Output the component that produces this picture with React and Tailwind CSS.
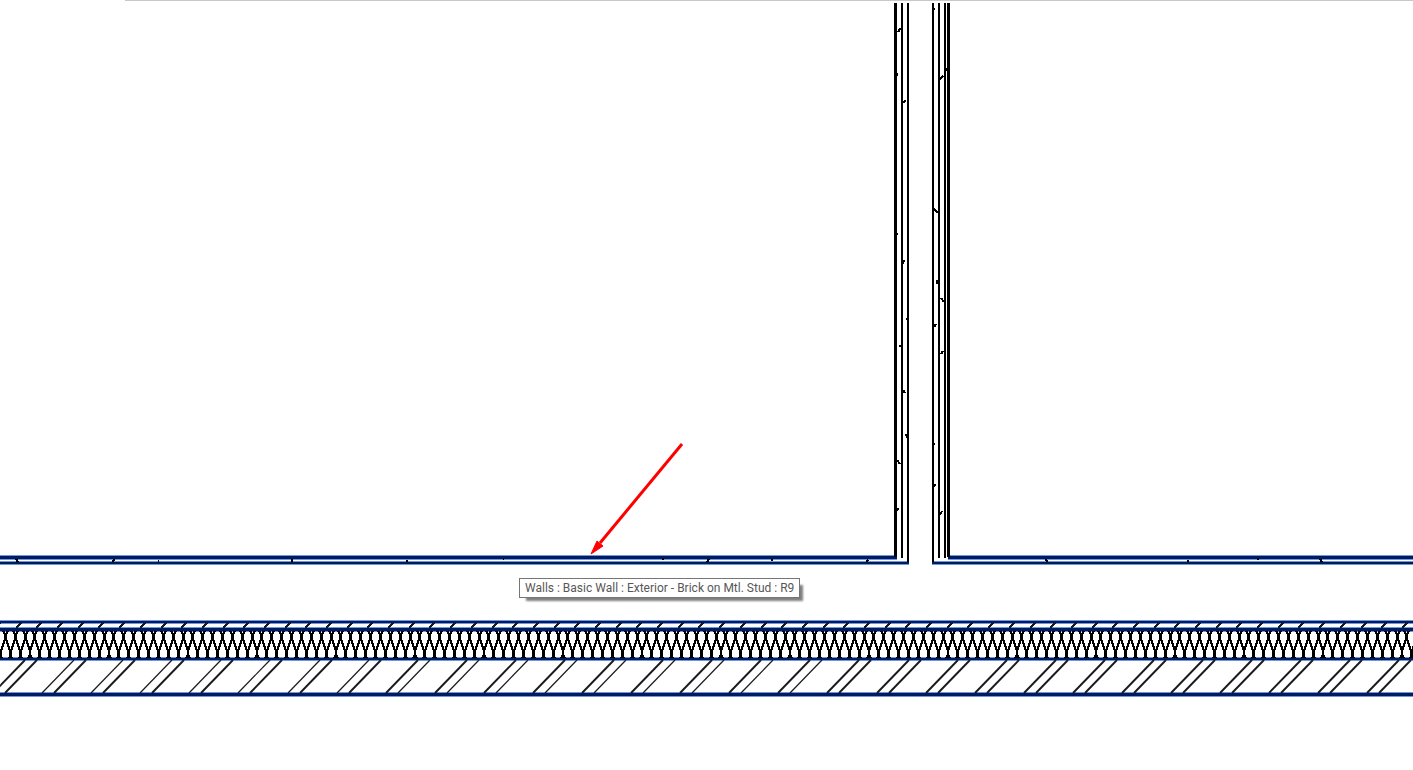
const BRICK = Array.from({ length: 31 }, (_, i) => Math.round(-24 + i * 49.08));
const SHEATH = Array.from({ length: 70 }, (_, i) => Math.round(i * 20.69));
const BATT = Array.from({ length: 146 }, (_, i) => Math.round(-5 + i * 9.87));

const SPECKS = [
  "M898 32l2-3h2", "M897 73v3", "M903 103l2-2v-1", "M934 8v2", "M940 80l1-2l2-2", "M946 68v3",
  "M897 233v2", "M903 264v-3h2", "M907 318v2", "M899 346h3v3", "M934 209l4 4", "M937 284v-3h1",
  "M941 298l3 4", "M934 327l2-3", "M941 354l2-3", "M903 390l2 3", "M905 435h2v3", "M897 460l3 4",
  "M897 511v-2h2", "M934 443v2", "M934 487l1-3", "M940 515l2-4", "M16 559l2 3", "M113 562l1-3",
  "M158 561h1", "M292 559v2l1 1", "M406 561h2", "M503 559h1", "M662 559h2", "M707 562l2-3",
  "M771 560h2", "M866 562l2-2", "M1046 559l1 3", "M1187 561h2", "M1257 559h2", "M1320 559l2 3",
];

function Band({ y, x1, x2, dark }) {
  return (
    <g>
      <rect x={x1} y={y} width={x2 - x1} height={dark + 2} fill="#7395db" />
      <rect x={x1} y={y + 1} width={x2 - x1} height={dark} fill="#001c60" />
    </g>
  );
}

function Partition() {
  return (
    <g fill="#000">
      <rect x="894" y="3" width="3" height="554" />
      <rect x="901" y="3" width="2" height="555" />
      <rect x="907" y="3" width="2" height="559" />
      <rect x="932" y="3" width="2" height="559" />
      <rect x="938" y="3" width="2" height="555" />
      <rect x="944" y="3" width="2" height="555" />
      <rect x="947" y="3" width="3" height="554" />
    </g>
  );
}

function Plan() {
  return (
    <svg className="block h-screen w-full" viewBox="0 0 1413 770" preserveAspectRatio="xMinYMin slice" shapeRendering="crispEdges" role="img" aria-label="Wall section plan">
      <rect x="125" y="0" width="1288" height="1" fill="#c8c8c8" />
      <Band y={555} x1={0} x2={897} dark={3} />
      <Band y={561} x1={0} x2={909} dark={2} />
      <Band y={555} x1={948} x2={1413} dark={3} />
      <Band y={561} x1={932} x2={1413} dark={2} />
      <Partition />
      <g fill="none" stroke="#000" strokeWidth="2">
        {SPECKS.map((d) => <path key={d} d={d} />)}
      </g>
      <Band y={620} x1={0} x2={1413} dark={2} />
      <Band y={627} x1={0} x2={1413} dark={3} />
      <Band y={657} x1={0} x2={1413} dark={2} />
      <Band y={692} x1={0} x2={1413} dark={3} />
      <g stroke="#1a1a1e" strokeWidth="2">
        {SHEATH.map((x) => <path key={x} d={`M${x - 5} 628l5-5`} />)}
      </g>
      <g fill="none" stroke="#000" strokeWidth="2">
        {BATT.map((x) => (
          <path
            key={x}
            d={`M${x - 2} 631l2 3v2l5 15v4l2 3M${x + 3} 631l-2 3v2l-5 15v4l-2 3`}
          />
        ))}
      </g>
      <g stroke="#1a1a1e" shapeRendering="geometricPrecision">
        {BRICK.map((x, i) => (
          <g key={x}>
            <path d={`M${x} 660l-32 33`} strokeWidth={i > 1 && i < 9 ? 1.2 : 1.9} />
            <path d={`M${x + 12} 660l-32 33`} strokeWidth={i > 8 && i < 18 ? 1.2 : 1.9} />
          </g>
        ))}
      </g>
      <g shapeRendering="geometricPrecision">
        <path d="M682 444L600 543" stroke="#f00" strokeWidth="3" fill="none" />
        <path d="M591 554L597 541L603 546Z" fill="#f00" stroke="#f00" strokeWidth="1" />
      </g>
    </svg>
  );
}

export default function App() {
  return (
    <main className="relative overflow-hidden bg-white">
      <Plan />
      <div role="tooltip" className="absolute top-[578px] left-[519px] flex h-5 items-center border border-[#767676] bg-white px-[5px] font-['Roboto',sans-serif] text-[12px] leading-4 whitespace-nowrap text-[#575757] shadow-[5px_5px_2px_-2px_#808080]">
        Walls : Basic Wall : Exterior - Brick on Mtl. Stud : R9
      </div>
    </main>
  );
}
